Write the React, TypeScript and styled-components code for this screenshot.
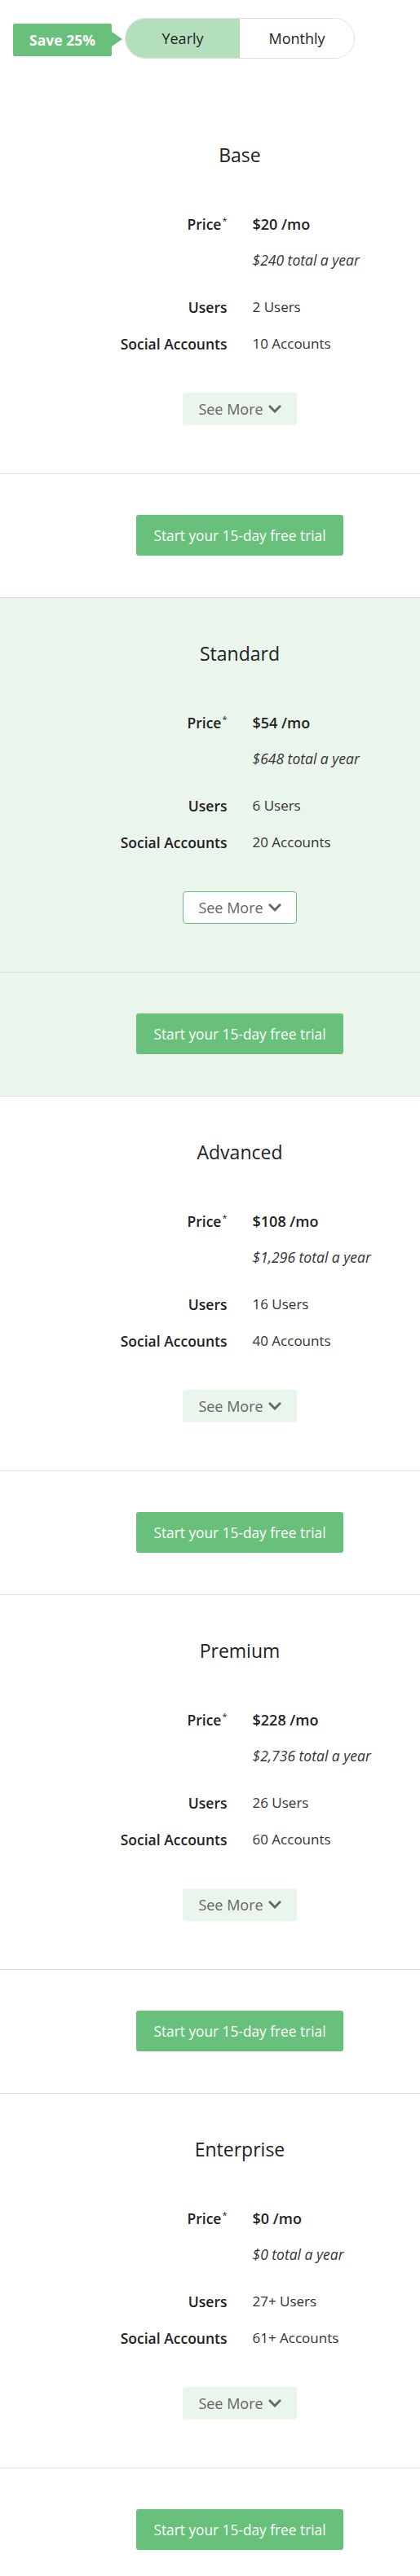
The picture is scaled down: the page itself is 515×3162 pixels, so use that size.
import React from "react";
import styled, { createGlobalStyle, css } from "styled-components";

const GlobalStyle = createGlobalStyle`
  html, body { margin: 0; padding: 0; background: #fff; }
  body { font-family: "Open Sans", "Liberation Sans", sans-serif; color: #222; }
  * { box-sizing: border-box; }
`;

const Page = styled.div`
  width: 515px;
`;

const Header = styled.div`
  height: 121px;
  padding: 22px 0 0 73px;
  display: flex;
  justify-content: center;
  align-items: flex-start;
`;

const ToggleWrap = styled.div`
  position: relative;
`;

const SaveBadge = styled.div`
  position: absolute;
  right: calc(100% + 16px);
  top: 7px;
  height: 40px;
  width: 121px;
  background: #68c07a;
  border-radius: 2px;
  color: #fff;
  font-weight: 700;
  font-size: 17.5px;
  display: flex;
  align-items: center;
  justify-content: center;
  white-space: nowrap;
  &::after {
    content: "";
    position: absolute;
    left: 100%;
    top: 50%;
    margin-top: -10px;
    border-left: 13px solid #68c07a;
    border-top: 9px solid transparent;
    border-bottom: 9px solid transparent;
  }
`;

const Toggle = styled.div`
  display: flex;
  width: 282px;
  height: 50px;
  border: 1px solid #dedede;
  border-radius: 25px;
  overflow: hidden;
`;

const Segment = styled.div<{ $active?: boolean }>`
  flex: 1;
  display: flex;
  align-items: center;
  justify-content: center;
  font-size: 18px;
  color: #222;
  background: ${(p) => (p.$active ? "#b4dfbd" : "#fff")};
`;

const Plan = styled.section<{ $featured?: boolean }>`
  background: ${(p) => (p.$featured ? "#eaf5ec" : "#fff")};
`;

const Upper = styled.div<{ $first?: boolean }>`
  border-top: 1px solid ${(p) => (p.$first ? "transparent" : "#dddddd")};
  padding: 52px 0 59px 73px;
  display: flex;
  flex-direction: column;
  align-items: center;
`;

const Title = styled.h2`
  margin: 0;
  height: 32px;
  font-size: 23px;
  line-height: 32px;
  font-weight: 400;
  color: #222;
`;

const Table = styled.div`
  width: 100%;
  margin-top: 57px;
  display: flex;
  flex-direction: column;
  gap: 21px;
`;

const Row = styled.div<{ $extra?: number }>`
  display: grid;
  grid-template-columns: 1fr 1fr;
  column-gap: 31px;
  align-items: start;
  padding-bottom: ${(p) => p.$extra ?? 0}px;
`;

const Label = styled.div`
  height: 24px;
  text-align: right;
  font-size: 17.5px;
  line-height: 24px;
  font-weight: 600;
  color: #222;
  white-space: nowrap;
`;

const Star = styled.span`
  font-size: 11px;
  font-weight: 400;
  position: relative;
  top: -7px;
  margin-left: 1px;
`;

const Value = styled.div`
  font-size: 17px;
  line-height: 24px;
  color: #333;
  white-space: nowrap;
  display: flex;
  flex-direction: column;
  gap: 20px;
`;

const Line = styled.span<{ $price?: boolean }>`
  height: 24px;
  ${(p) =>
    p.$price
      ? css`
          font-size: 18px;
          font-weight: 600;
          color: #222;
        `
      : css`
          font-size: 17.5px;
          font-style: italic;
          color: #333;
        `}
`;

const SeeMore = styled.button<{ $featured?: boolean }>`
  margin-top: 48px;
  height: 40px;
  width: 140px;
  flex: none;
  border-radius: 4px;
  font-family: inherit;
  font-size: 18px;
  line-height: 24px;
  color: #666;
  display: flex;
  align-items: center;
  justify-content: center;
  gap: 6px;
  padding: 0;
  cursor: pointer;
  ${(p) =>
    p.$featured
      ? css`
          background: #fff;
          border: 1px solid #68c07a;
        `
      : css`
          background: #eaf5ec;
          border: none;
        `}
`;

const Trial = styled.div`
  border-top: 1px solid #dddddd;
  padding: 50px 0 51px 73px;
  display: flex;
  justify-content: center;
`;

const TrialButton = styled.button`
  height: 50px;
  width: 254px;
  border: none;
  border-radius: 3px;
  background: #68c07a;
  color: #fff;
  font-family: inherit;
  font-size: 17.3px;
  padding: 0;
  cursor: pointer;
`;

const Chevron = () => (
  <svg width="16" height="18" viewBox="0 0 448 512" fill="#666" aria-hidden="true">
    <path d="M207.029 381.476L12.686 187.132c-9.373-9.373-9.373-24.569 0-33.941l22.667-22.667c9.357-9.357 24.522-9.375 33.901-.04L224 284.505l154.745-154.021c9.379-9.335 24.544-9.317 33.901.04l22.667 22.667c9.373 9.373 9.373 24.569 0 33.941L240.971 381.476c-9.373 9.372-24.569 9.372-33.942 0z" />
  </svg>
);

type PlanData = {
  name: string;
  price: string;
  total: string;
  users: string;
  accounts: string;
  featured?: boolean;
};

const plans: PlanData[] = [
  { name: "Base", price: "$20", total: "$240", users: "2 Users", accounts: "10 Accounts" },
  { name: "Standard", price: "$54", total: "$648", users: "6 Users", accounts: "20 Accounts", featured: true },
  { name: "Advanced", price: "$108", total: "$1,296", users: "16 Users", accounts: "40 Accounts" },
  { name: "Premium", price: "$228", total: "$2,736", users: "26 Users", accounts: "60 Accounts" },
  { name: "Enterprise", price: "$0", total: "$0", users: "27+ Users", accounts: "61+ Accounts" },
];

export default function App() {
  return (
    <>
      <GlobalStyle />
      <Page>
        <Header>
          <ToggleWrap>
            <SaveBadge>Save 25%</SaveBadge>
            <Toggle>
              <Segment $active>Yearly</Segment>
              <Segment>Monthly</Segment>
            </Toggle>
          </ToggleWrap>
        </Header>
        {plans.map((p, i) => (
          <Plan key={p.name} $featured={p.featured}>
            <Upper $first={i === 0}>
              <Title>{p.name}</Title>
              <Table>
                <Row $extra={13}>
                  <Label>
                    Price<Star>*</Star>
                  </Label>
                  <Value>
                    <Line $price>{p.price} /mo</Line>
                    <Line>{p.total} total a year</Line>
                  </Value>
                </Row>
                <Row>
                  <Label>Users</Label>
                  <Value>{p.users}</Value>
                </Row>
                <Row>
                  <Label>Social Accounts</Label>
                  <Value>{p.accounts}</Value>
                </Row>
              </Table>
              <SeeMore $featured={p.featured}>
                See More <Chevron />
              </SeeMore>
            </Upper>
            <Trial>
              <TrialButton>Start your 15-day free trial</TrialButton>
            </Trial>
          </Plan>
        ))}
      </Page>
    </>
  );
}
